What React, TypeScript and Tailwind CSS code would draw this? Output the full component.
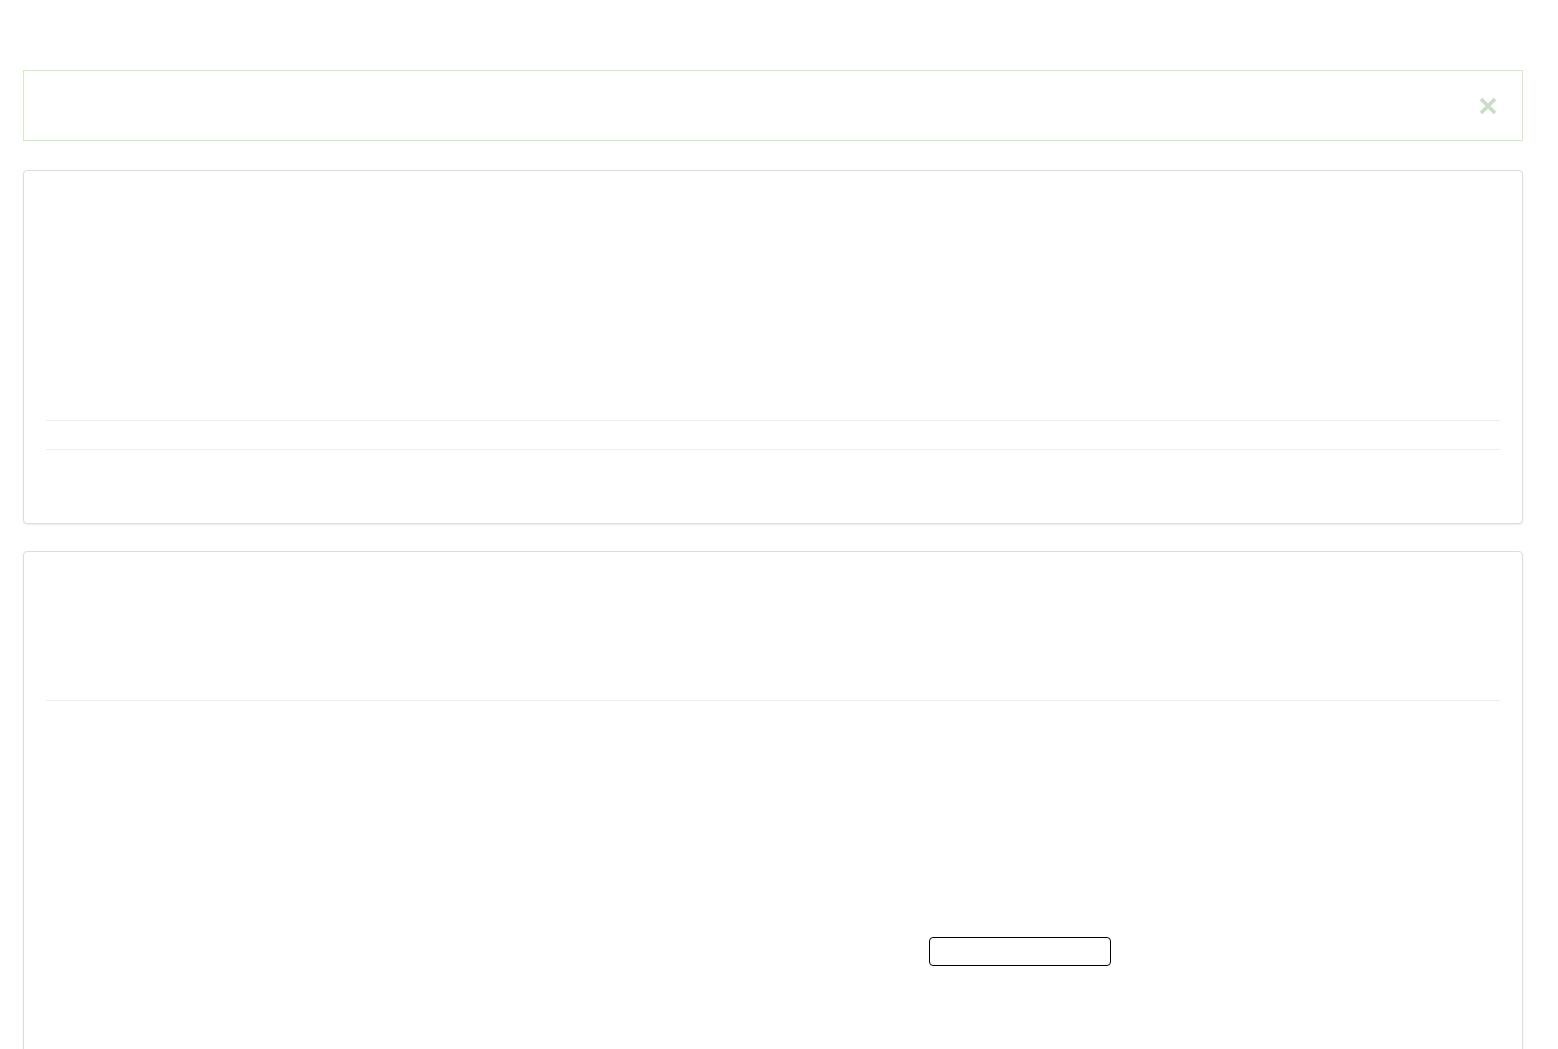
export default function App() {
  return (
    <div className="h-screen overflow-hidden bg-white px-[23px] pt-[70px] font-['Liberation_Sans',Arial,sans-serif] text-[#333]">
      <div className="w-[1500px]">
        {/* success alert */}
        <div className="flex h-[71px] items-center justify-end border border-[#d6e9c6] bg-white pr-[25px]">
          <button aria-label="Close" className="flex h-[18px] w-[18px] items-center justify-center">
            <svg width="18" height="18" viewBox="0 0 18 18">
              <path d="M2 2 L16 16 M16 2 L2 16" stroke="#c9dcc5" strokeWidth="3.4" strokeLinecap="butt" />
            </svg>
          </button>
        </div>

        {/* panel one */}
        <div className="mt-[29px] flex h-[354px] flex-col rounded-[4px] border border-[#ddd] bg-white px-[22px] shadow-[0_1px_2px_rgba(0,0,0,0.08)]">
          <div className="h-[249px]" />
          <div className="border-t border-[#eee]" />
          <div className="h-[28px]" />
          <div className="border-t border-[#eee]" />
          <div className="flex-1" />
        </div>

        {/* panel two */}
        <div className="mt-[27px] flex h-[600px] flex-col rounded-[4px] border border-[#ddd] bg-white px-[22px] shadow-[0_1px_2px_rgba(0,0,0,0.08)]">
          <div className="h-[148px]" />
          <div className="border-t border-[#eee]" />
          <div className="ml-[883px] mt-[236px]">
            <input className="h-[29px] w-[182px] rounded-[4px] border-[1.5px] border-black bg-white" />
          </div>
        </div>
      </div>
    </div>
  );
}
